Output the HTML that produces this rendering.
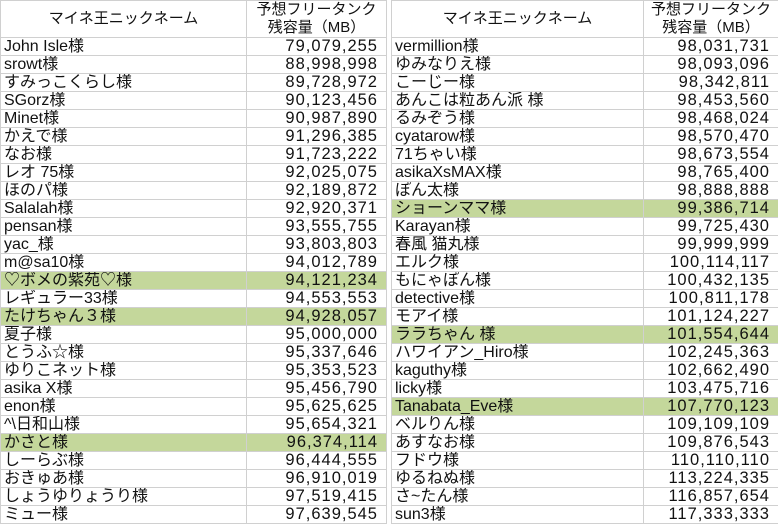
<!DOCTYPE html>
<html><head><meta charset="utf-8"><style>
body{margin:0;width:778px;height:523px;background:#fff;overflow:hidden;font-family:"Liberation Sans","Noto Sans CJK JP",sans-serif;}
table{position:absolute;top:0;border-collapse:collapse;table-layout:fixed;font-size:16px;color:#111;}
td{border:1px solid #d0d0d0;height:17px;padding:0 0 0 3px;line-height:17px;white-space:nowrap;overflow:hidden;}
td.n{text-align:right;padding:0 8px 0 0;font-size:16.5px;letter-spacing:1px;}
tr.h td{height:35px;line-height:18px;text-align:center;padding:0;font-size:15px;letter-spacing:0;}
tr.g td{background:#c4d79b;}
#L{left:0;width:386px}
#R{left:391px;width:387px}
</style></head><body>
<table id="L"><colgroup><col style="width:246px"><col style="width:140px"></colgroup>
<tr class="h"><td>マイネ王ニックネーム</td><td>予想フリータンク<br>残容量（MB）</td></tr>
<tr><td>John Isle様</td><td class="n">79,079,255</td></tr>
<tr><td>srowt様</td><td class="n">88,998,998</td></tr>
<tr><td>すみっこくらし様</td><td class="n">89,728,972</td></tr>
<tr><td>SGorz様</td><td class="n">90,123,456</td></tr>
<tr><td>Minet様</td><td class="n">90,987,890</td></tr>
<tr><td>かえで様</td><td class="n">91,296,385</td></tr>
<tr><td>なお様</td><td class="n">91,723,222</td></tr>
<tr><td>レオ 75様</td><td class="n">92,025,075</td></tr>
<tr><td>ほのパ様</td><td class="n">92,189,872</td></tr>
<tr><td>Salalah様</td><td class="n">92,920,371</td></tr>
<tr><td>pensan様</td><td class="n">93,555,755</td></tr>
<tr><td>yac_様</td><td class="n">93,803,803</td></tr>
<tr><td>m@sa10様</td><td class="n">94,012,789</td></tr>
<tr class="g"><td>♡ボメの紫苑♡様</td><td class="n">94,121,234</td></tr>
<tr><td>レギュラー33様</td><td class="n">94,553,553</td></tr>
<tr class="g"><td>たけちゃん３様</td><td class="n">94,928,057</td></tr>
<tr><td>夏子様</td><td class="n">95,000,000</td></tr>
<tr><td>とうふ☆様</td><td class="n">95,337,646</td></tr>
<tr><td>ゆりこネット様</td><td class="n">95,353,523</td></tr>
<tr><td>asika X様</td><td class="n">95,456,790</td></tr>
<tr><td>enon様</td><td class="n">95,625,625</td></tr>
<tr><td>^\日和山様</td><td class="n">95,654,321</td></tr>
<tr class="g"><td>かさと様</td><td class="n">96,374,114</td></tr>
<tr><td>しーらぶ様</td><td class="n">96,444,555</td></tr>
<tr><td>おきゅあ様</td><td class="n">96,910,019</td></tr>
<tr><td>しょうゆりょうり様</td><td class="n">97,519,415</td></tr>
<tr><td>ミュー様</td><td class="n">97,639,545</td></tr>
</table>
<table id="R"><colgroup><col style="width:252px"><col style="width:135px"></colgroup>
<tr class="h"><td>マイネ王ニックネーム</td><td>予想フリータンク<br>残容量（MB）</td></tr>
<tr><td>vermillion様</td><td class="n">98,031,731</td></tr>
<tr><td>ゆみなりえ様</td><td class="n">98,093,096</td></tr>
<tr><td>こーじー様</td><td class="n">98,342,811</td></tr>
<tr><td>あんこは粒あん派 様</td><td class="n">98,453,560</td></tr>
<tr><td>るみぞう様</td><td class="n">98,468,024</td></tr>
<tr><td>cyatarow様</td><td class="n">98,570,470</td></tr>
<tr><td>71ちゃい様</td><td class="n">98,673,554</td></tr>
<tr><td>asikaXsMAX様</td><td class="n">98,765,400</td></tr>
<tr><td>ぽん太様</td><td class="n">98,888,888</td></tr>
<tr class="g"><td>ショーンママ様</td><td class="n">99,386,714</td></tr>
<tr><td>Karayan様</td><td class="n">99,725,430</td></tr>
<tr><td>春風 猫丸様</td><td class="n">99,999,999</td></tr>
<tr><td>エルク様</td><td class="n">100,114,117</td></tr>
<tr><td>もにゃぽん様</td><td class="n">100,432,135</td></tr>
<tr><td>detective様</td><td class="n">100,811,178</td></tr>
<tr><td>モアイ様</td><td class="n">101,124,227</td></tr>
<tr class="g"><td>ララちゃん 様</td><td class="n">101,554,644</td></tr>
<tr><td>ハワイアン_Hiro様</td><td class="n">102,245,363</td></tr>
<tr><td>kaguthy様</td><td class="n">102,662,490</td></tr>
<tr><td>licky様</td><td class="n">103,475,716</td></tr>
<tr class="g"><td>Tanabata_Eve様</td><td class="n">107,770,123</td></tr>
<tr><td>ベルりん様</td><td class="n">109,109,109</td></tr>
<tr><td>あすなお様</td><td class="n">109,876,543</td></tr>
<tr><td>フドウ様</td><td class="n">110,110,110</td></tr>
<tr><td>ゆるねぬ様</td><td class="n">113,224,335</td></tr>
<tr><td>さ~たん様</td><td class="n">116,857,654</td></tr>
<tr><td>sun3様</td><td class="n">117,333,333</td></tr>
</table>
</body></html>
